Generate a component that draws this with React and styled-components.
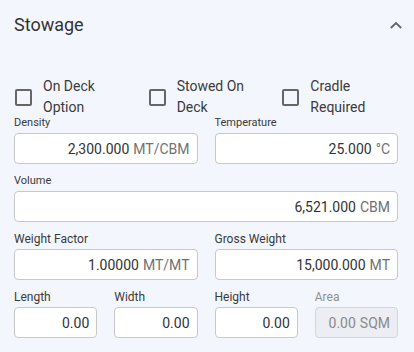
import React from "react";
import styled, { createGlobalStyle } from "styled-components";

const GlobalStyle = createGlobalStyle`
  html, body {
    margin: 0;
    padding: 0;
    background: #f4f6fd;
    font-family: Roboto, "Liberation Sans", Arial, sans-serif;
  }
`;

const Panel = styled.div`
  width: 414px;
  height: 352px;
  box-sizing: border-box;
  padding: 0 16px 0 14px;
  background: #f4f6fd;
  color: #333;
`;

const Header = styled.div`
  height: 48px;
  display: flex;
  align-items: center;
  justify-content: space-between;
`;

const Title = styled.h2`
  margin: 0;
  font-size: 18px;
  font-weight: 400;
  color: #333;
`;

const Chevron = styled.svg`
  width: 14px;
  height: 14px;
  margin-right: -5px;
  margin-top: 1px;
`;

const CheckRow = styled.div`
  display: grid;
  grid-template-columns: repeat(3, 1fr);
  column-gap: 17px;
  margin-top: 28px;
`;

const CheckItem = styled.label`
  display: flex;
  align-items: center;
  gap: 11px;
  padding-left: 1px;
`;

const Box = styled.span`
  flex: none;
  width: 13px;
  height: 13px;
  border: 2px solid #666;
  border-radius: 2px;
`;

const CheckText = styled.span`
  font-size: 14px;
  line-height: 21px;
  color: #3a3a3a;
`;

const Grid = styled.div`
  display: grid;
  grid-template-columns: repeat(4, 1fr);
  column-gap: 17px;
  row-gap: 10px;
  margin-top: -2px;
`;

const Field = styled.div`
  grid-column: span ${(p) => p.span || 1};
  display: flex;
  flex-direction: column;
`;

const Label = styled.span`
  font-size: ${(p) => (p.small ? "11px" : "12px")};
  line-height: 14px;
  height: 14px;
  margin-bottom: 3px;
  color: ${(p) => (p.disabled ? "#8f8f8f" : "#3a3a3a")};
`;

const Input = styled.div`
  height: 31px;
  box-sizing: border-box;
  border: 1px solid ${(p) => (p.disabled ? "#d3d6dd" : "#c8c8c8")};
  border-radius: 4px;
  background: ${(p) => (p.disabled ? "#eceef3" : "#fff")};
  display: flex;
  align-items: center;
  justify-content: flex-end;
  padding: 0 7px;
  font-size: 14px;
  color: ${(p) => (p.disabled ? "#8a8a8a" : "#333")};
  white-space: nowrap;
`;

const Unit = styled.span`
  margin-left: 4px;
  color: ${(p) => (p.disabled ? "#8a8a8a" : "#717171")};
`;

const checks = ["On Deck Option", "Stowed On Deck", "Cradle Required"];

const fields = [
  { label: "Density", value: "2,300.000", unit: "MT/CBM", span: 2, small: true },
  { label: "Temperature", value: "25.000", unit: "°C", span: 2, small: true },
  { label: "Volume", value: "6,521.000", unit: "CBM", span: 4, small: true },
  { label: "Weight Factor", value: "1.00000", unit: "MT/MT", span: 2 },
  { label: "Gross Weight", value: "15,000.000", unit: "MT", span: 2 },
  { label: "Length", value: "0.00" },
  { label: "Width", value: "0.00" },
  { label: "Height", value: "0.00" },
  { label: "Area", value: "0.00", unit: "SQM", disabled: true },
];

export default function App() {
  return (
    <>
      <GlobalStyle />
      <Panel>
        <Header>
          <Title>Stowage</Title>
          <Chevron viewBox="0 0 14 14">
            <path d="M1.8 10 L7 5 L12.2 10" fill="none" stroke="#666" strokeWidth="1.8" />
          </Chevron>
        </Header>
        <CheckRow>
          {checks.map((c) => (
            <CheckItem key={c}>
              <Box />
              <CheckText>{c}</CheckText>
            </CheckItem>
          ))}
        </CheckRow>
        <Grid>
          {fields.map((f) => (
            <Field key={f.label} span={f.span}>
              <Label small={f.small} disabled={f.disabled}>{f.label}</Label>
              <Input disabled={f.disabled}>
                {f.value}
                {f.unit && <Unit disabled={f.disabled}>{f.unit}</Unit>}
              </Input>
            </Field>
          ))}
        </Grid>
      </Panel>
    </>
  );
}
